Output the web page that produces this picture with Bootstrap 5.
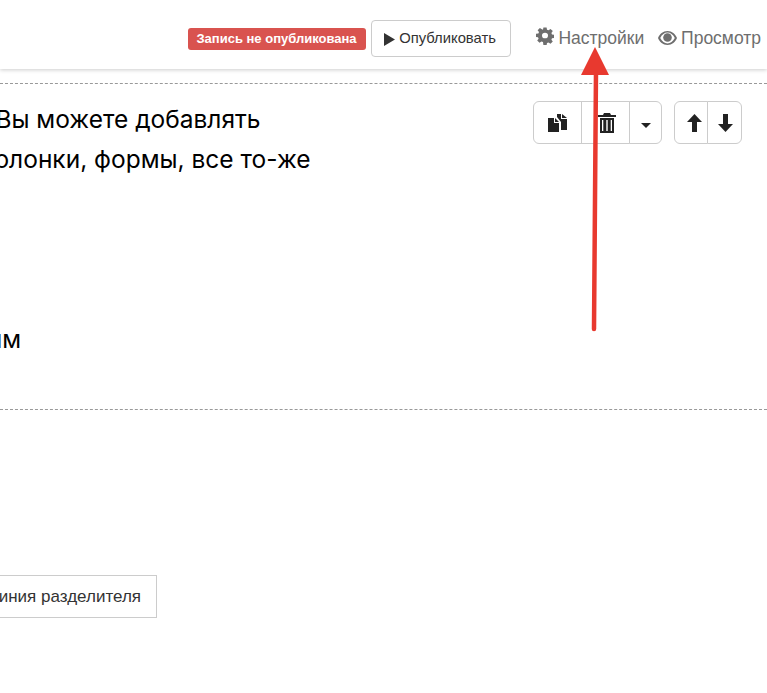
<!DOCTYPE html>
<html lang="ru">
<head>
  <meta charset="UTF-8">
  <meta name="viewport" content="width=device-width, initial-scale=1.0">
  <title>Настройки</title>
  <link href="https://cdn.jsdelivr.net/npm/bootstrap@5.3.3/dist/css/bootstrap.min.css" rel="stylesheet">
  <style>
    html, body {
      height: 693px;
      overflow: hidden;
    }

    body {
      position: relative;
      font-family: "Liberation Sans", Arial, sans-serif;
      background: #fff;
      color: #333;
    }

    .top-bar {
      height: 69px;
      padding-top: 20px;
      padding-right: 6px;
      box-shadow: 0 1px 4px rgba(0,0,0,0.2);
    }

    .unpub-label {
      height: 22px;
      margin-top: 8px;
      width: 178px;
      background: #d9534f;
      color: #fff;
      font-size: 13px;
      font-weight: 700;
      line-height: 22px;
      text-align: center;
      border-radius: 3px;
      white-space: nowrap;
    }

    .publish-btn {
      height: 37px;
      width: 140px;
      margin-left: 5px;
      padding: 0 2px 0 0;
      font-size: 14.8px;
      color: #333;
      border: 1px solid #ccc;
      border-radius: 4px;
      background: #fff;
    }

    .top-link {
      color: #6e6e6e;
      font-size: 17.5px;
      line-height: 37px;
      text-decoration: none;
      white-space: nowrap;
    }

    .top-link svg {
      vertical-align: -1px;
      fill: #6e6e6e;
    }

    .link-settings { margin-left: 25px; }
    .link-preview { margin-left: 14px; }
    .link-preview svg { margin-right: -1px; }

    .edit-block {
      margin-top: 14px;
      height: 327px;
      border-top: 1px dashed #999;
      border-bottom: 1px dashed #999;
      position: relative;
    }

    .edit-text {
      padding-top: 15px;
      margin-left: -4.6px;
      font-family: Inter, "Liberation Sans", sans-serif;
      font-size: 24.5px;
      line-height: 40px;
      color: #000;
      white-space: nowrap;
    }

    .edit-text .gap-line { margin-top: 140px; margin-left: -7.7px; }
    .edit-text .cut-line { margin-left: -1px; }

    .block-tools {
      position: absolute;
      top: 17px;
      right: 25px;
      gap: 12px;
    }

    .tool-btn {
      height: 43px;
      padding: 0;
      border: 1px solid #ccc;
      background: #fff;
      display: flex;
      align-items: center;
      justify-content: center;
    }

    .tool-wide { width: 49px; }
    .tool-trash { padding-left: 3px; }
    .tool-caret { width: 33px; padding-top: 5px; }
    .tool-arrow { width: 34px; padding-left: 6px; }
    .tool-arrow-end { width: 35px; padding-left: 1px; }

    .divider-btn {
      margin-top: 165px;
      margin-left: -40px;
      width: 197px;
      height: 43px;
      border: 1px solid #ccc;
      background: #fff;
      color: #333;
      font-size: 17px;
      line-height: 41px;
      text-align: right;
      padding-right: 15px;
      white-space: nowrap;
      overflow: hidden;
    }

    .red-arrow {
      position: absolute;
      left: 570px;
      top: 40px;
    }
  </style>
</head>
<body>
  <div class="top-bar d-flex justify-content-end align-items-start">
    <span class="unpub-label">Запись не опубликована</span>
    <button type="button" class="btn publish-btn">
      <svg width="12" height="13" viewBox="0 0 12 13" fill="#333"><path d="M1 0l11 6.500L1 13z"/></svg>
      Опубликовать
    </button>
    <a href="#" class="top-link link-settings">
      <svg width="18" height="18" viewBox="0 0 18 18"><path fill-rule="evenodd" d="M7.400 0h3.200l.4 2.400 1.500.6 2-1.400 2.300 2.300-1.400 2 .6 1.500 2.400.4v3.200l-2.400.4-.6 1.500 1.400 2-2.300 2.300-2-1.400-1.500.6-.4 2.400H7.400L7 15.400 5.500 14.800l-2 1.400-2.300-2.300 1.400-2-.6-1.500L0 10V6.800l2.400-.4.6-1.500-1.400-2L3.900.6l2 1.400L7 2.400zM9 5.500a3 3 0 1 0 0 6 3 3 0 0 0 0-6z" transform="translate(0 .4) scale(1 .95)"/></svg>
      Настройки
    </a>
    <a href="#" class="top-link link-preview">
      <svg width="19" height="14" viewBox="0 0 19 14"><path fill-rule="evenodd" d="M9.500 0C5 0 1.600 3 0 7c1.600 4 5 7 9.500 7S17.400 11 19 7c-1.600-4-5-7-9.500-7zm0 1.600c2.900 0 5.500 1.900 7.300 5.400-1.800 3.500-4.400 5.400-7.300 5.400S4 10.500 2.200 7C4 3.500 6.600 1.600 9.500 1.600z"/><circle cx="9.500" cy="6.500" r="4.300"/></svg>
      Просмотр
    </a>
  </div>

  <div class="edit-block">
    <div class="edit-text">
      <div>Вы можете добавлять</div>
      <div class="cut-line">олонки, формы, все то-же</div>
      <div class="gap-line">им</div>
    </div>
    <div class="block-tools d-flex">
      <div class="btn-group">
        <button type="button" class="btn tool-btn tool-wide">
          <svg width="20" height="18" viewBox="0 0 20 18" fill="#222"><path d="M0 4h6v5h5v9H0z"/><path d="M7 4l4 4H7z"/><path d="M9 0h4v5h6v11h-6V8L9 3z"/><path d="M14 0l5 4h-5z"/></svg>
        </button>
        <button type="button" class="btn tool-btn tool-wide tool-trash">
          <svg width="18" height="20" viewBox="0 0 18 20" fill="#222"><path d="M6 0h6l1 2h5v2H0V2h5z"/><path fill-rule="evenodd" d="M2 5h14v15H2zM4 7v11h1.300V7zm4.300 0v11h1.400V7zm4.400 0v11H14V7z"/></svg>
        </button>
        <button type="button" class="btn tool-btn tool-caret">
          <svg width="10" height="5" viewBox="0 0 10 5" fill="#222"><path d="M0 0h10L5 5z"/></svg>
        </button>
      </div>
      <div class="btn-group">
        <button type="button" class="btn tool-btn tool-arrow">
          <svg width="15" height="18" viewBox="0 0 15 18" fill="#222"><path d="M7.500 0L15 8h-5v10H5V8H0z"/></svg>
        </button>
        <button type="button" class="btn tool-btn tool-arrow-end">
          <svg width="15" height="18" viewBox="0 0 15 18" fill="#222"><path d="M7.500 18L15 10h-5V0H5v10H0z"/></svg>
        </button>
      </div>
    </div>
  </div>

  <div class="divider-btn">линия разделителя</div>

  <svg class="red-arrow" width="50" height="300" viewBox="0 0 50 300">
    <path d="M24 289L26 30" stroke="#e8392f" stroke-width="4.500" stroke-linecap="round" fill="none"/>
    <path d="M25 7L39 35H11z" fill="#e8392f"/>
  </svg>

  <script src="https://cdn.jsdelivr.net/npm/bootstrap@5.3.3/dist/js/bootstrap.bundle.min.js"></script>
</body>
</html>
